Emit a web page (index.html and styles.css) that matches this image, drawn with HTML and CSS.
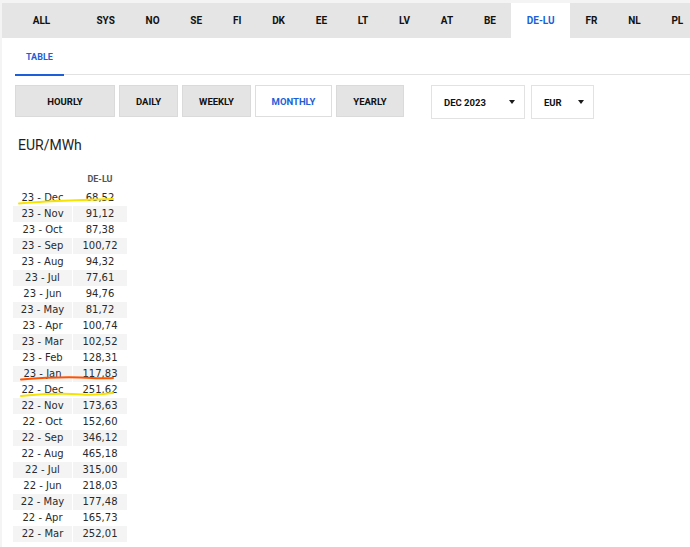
FILE: index.html
```html
<!DOCTYPE html>
<html lang="en">
<head>
<meta charset="utf-8">
<title>Prices DE-LU</title>
<link rel="stylesheet" href="styles.css">
</head>
<body>
<div class="page">
  <nav class="areas">
    <span class="area area-all">ALL</span>
    <span class="area">SYS</span>
    <span class="area">NO</span>
    <span class="area">SE</span>
    <span class="area">FI</span>
    <span class="area">DK</span>
    <span class="area">EE</span>
    <span class="area">LT</span>
    <span class="area">LV</span>
    <span class="area">AT</span>
    <span class="area">BE</span>
    <span class="area active">DE-LU</span>
    <span class="area">FR</span>
    <span class="area">NL</span>
    <span class="area">PL</span>
  </nav>
  <div class="content">
    <div class="subtabs"><span class="subtab active">TABLE</span></div>
    <div class="controls">
      <div class="resolutions">
        <span class="res res-hourly">HOURLY</span>
        <span class="res res-daily">DAILY</span>
        <span class="res res-weekly">WEEKLY</span>
        <span class="res res-monthly active">MONTHLY</span>
        <span class="res res-yearly">YEARLY</span>
      </div>
      <div class="selects">
        <div class="select select-date"><span>DEC 2023</span><i class="caret"></i></div>
        <div class="select select-cur"><span>EUR</span><i class="caret"></i></div>
      </div>
    </div>
    <h2 class="unit">EUR/MWh</h2>
    <table class="prices">
      <colgroup><col class="c1"><col class="c2"></colgroup>
      <thead><tr><th></th><th>DE-LU</th></tr></thead>
      <tbody>
        <tr><td>23 - Dec</td><td>68,52</td></tr>
        <tr><td>23 - Nov</td><td>91,12</td></tr>
        <tr><td>23 - Oct</td><td>87,38</td></tr>
        <tr><td>23 - Sep</td><td>100,72</td></tr>
        <tr><td>23 - Aug</td><td>94,32</td></tr>
        <tr><td>23 - Jul</td><td>77,61</td></tr>
        <tr><td>23 - Jun</td><td>94,76</td></tr>
        <tr><td>23 - May</td><td>81,72</td></tr>
        <tr><td>23 - Apr</td><td>100,74</td></tr>
        <tr><td>23 - Mar</td><td>102,52</td></tr>
        <tr><td>23 - Feb</td><td>128,31</td></tr>
        <tr><td>23 - Jan</td><td>117,83</td></tr>
        <tr><td>22 - Dec</td><td>251,62</td></tr>
        <tr><td>22 - Nov</td><td>173,63</td></tr>
        <tr><td>22 - Oct</td><td>152,60</td></tr>
        <tr><td>22 - Sep</td><td>346,12</td></tr>
        <tr><td>22 - Aug</td><td>465,18</td></tr>
        <tr><td>22 - Jul</td><td>315,00</td></tr>
        <tr><td>22 - Jun</td><td>218,03</td></tr>
        <tr><td>22 - May</td><td>177,48</td></tr>
        <tr><td>22 - Apr</td><td>165,73</td></tr>
        <tr><td>22 - Mar</td><td>252,01</td></tr>
      </tbody>
    </table>
  </div>
</div>
<svg class="marks" width="690" height="547" viewBox="0 0 690 547">
  <path d="M19 203.5 C40 201.5 75 200 113 199" stroke="#f6e300" stroke-width="2" fill="none" stroke-linecap="round"/>
  <path d="M21 379.5 C45 377.5 70 376.5 92 378 C102 378.8 108 378.2 113 378" stroke="#ff5300" stroke-width="2" fill="none" stroke-linecap="round"/>
  <path d="M21 396 C42 394 62 393 82 394.5 C96 395.5 105 393.5 113 393" stroke="#f6e300" stroke-width="2" fill="none" stroke-linecap="round"/>
</svg>
</body>
</html>
```
FILE: styles.css
```css
body {
  margin: 0;
  width: 690px;
  height: 547px;
  overflow: hidden;
  position: relative;
  background: #f4f4f4;
  font-family: Roboto, "Liberation Sans", sans-serif;
  color: #1a1a1a;
}

.page {
  margin: 3px 0 0 2px;
  background: #fff;
  height: 544px;
}

.areas {
  display: flex;
  height: 35px;
  background: #e5e5e5;
  overflow: hidden;
}

.area {
  flex-shrink: 0;
  display: flex;
  align-items: center;
  justify-content: center;
  padding: 0 15.4px;
  font-size: 10px;
  font-weight: 700;
  color: #111;
}

.area-all {
  width: 79px;
  padding: 0;
}

.area.active {
  background: #fff;
  color: #1c5fd9;
}

.content {
  padding-left: 13px;
}

.subtabs {
  display: flex;
  height: 36px;
  border-bottom: 1px solid #e2e2e2;
}

.subtab {
  box-sizing: border-box;
  height: 38px;
  padding: 2px 11px 0;
  display: flex;
  align-items: center;
  font-size: 9px;
  font-weight: 700;
  color: #1c5fd9;
  border-bottom: 2px solid #1c5fd9;
}

.controls {
  display: flex;
  align-items: flex-start;
  margin-top: 10px;
}

.resolutions {
  display: flex;
  gap: 4px;
}

.res {
  box-sizing: border-box;
  height: 32px;
  display: flex;
  align-items: center;
  justify-content: center;
  background: #e4e4e4;
  border: 1px solid #dadada;
  font-size: 9.5px;
  font-weight: 700;
  color: #111;
}

.res-hourly { width: 100px; }
.res-daily { width: 59px; }
.res-weekly { width: 69px; }
.res-monthly { width: 77px; }
.res-yearly { width: 68px; }

.res.active {
  background: #fff;
  border-color: #dedede;
  color: #1c5fd9;
}

.selects {
  display: flex;
  gap: 6px;
  margin-left: 27px;
}

.select {
  box-sizing: border-box;
  height: 34px;
  display: flex;
  align-items: center;
  justify-content: space-between;
  padding: 0 9px 0 12px;
  border: 1px solid #e2e2e2;
  font-size: 9.5px;
  font-weight: 700;
  color: #111;
}

.select-date { width: 94px; }
.select-cur { width: 63px; }

.caret {
  width: 0;
  height: 0;
  border-left: 3px solid transparent;
  border-right: 3px solid transparent;
  border-top: 4px solid #1a1a1a;
}

.unit {
  margin: 18px 0 0 3px;
  font-size: 14px;
  line-height: 16px;
  font-weight: 400;
  color: #1e1e1e;
}

.prices {
  margin: 16px 0 0 -2px;
  width: 114px;
  table-layout: fixed;
  border-collapse: separate;
  border-spacing: 0;
  font-family: "DejaVu Sans", Verdana, sans-serif;
  font-size: 10px;
  color: #2a2a2a;
}

.prices .c1 { width: 60px; }
.prices .c2 { width: 54px; }

.prices th {
  height: 17px;
  padding: 1px 0 3px;
  font-family: Roboto, "Liberation Sans", sans-serif;
  font-size: 9px;
  font-weight: 700;
  color: #555;
  text-align: center;
  vertical-align: middle;
}

.prices td {
  height: 16px;
  padding: 0;
  line-height: 16px;
  text-align: center;
  white-space: nowrap;
}

.prices td:first-child {
  border-right: 1px solid #fff;
}

.prices tbody tr:nth-child(even) td {
  background: #f4f4f4;
}

.marks {
  position: absolute;
  left: 0;
  top: 0;
  pointer-events: none;
}
```
